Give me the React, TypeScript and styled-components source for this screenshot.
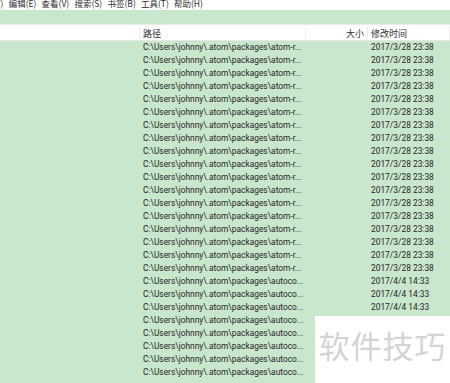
import React from "react"
import styled, { createGlobalStyle } from "styled-components"

const GlobalStyle = createGlobalStyle`
  html, body {
    margin: 0;
    padding: 0;
    background: #ffffff;
  }
  body {
    font-family: "Roboto", "Noto Sans CJK SC", sans-serif;
    color: #2b2b2b;
  }
`

const Page = styled.div`
  position: relative;
  width: 450px;
  height: 383px;
  overflow: hidden;
  background: #c8e7cc;
`

const MenuBar = styled.div`
  height: 10px;
  background: #ffffff;
  overflow: hidden;
`

const MenuList = styled.div`
  display: flex;
  gap: 5.2px;
  margin-top: -4px;
  margin-left: -24px;
  font-size: 8.5px;
  line-height: 14px;
  font-family: "Noto Sans CJK SC", sans-serif;
  color: #2e2e2e;
`

const MenuItem = styled.span`
  white-space: nowrap;
`

const Toolbar = styled.div`
  height: 14px;
  background: #c8e7cc;
  border-bottom: 1px solid #e3f1e5;
`

const Gap = styled.div`
  height: 1px;
  background: #ffffff;
`

const Grid = styled.div`
  display: grid;
  grid-template-columns: 140px 166px 62px 1fr;
`

const HeaderCell = styled.div<{ $align?: "left" | "right" }>`
  height: 15px;
  background: #ffffff;
  border-right: 1px solid #eeeeee;
  border-bottom: 1px solid #e6e6e6;
  box-sizing: border-box;
  display: flex;
  align-items: center;
  justify-content: ${(p) => (p.$align === "right" ? "flex-end" : "flex-start")};
  padding: 0 3px;
  font-family: "Noto Sans CJK SC", sans-serif;
  font-size: 9px;
  color: #2e2e2e;
  &:last-child {
    border-right: none;
  }
`

const Cell = styled.div<{ $align?: "left" | "right" }>`
  height: 13px;
  line-height: 13px;
  padding: 0 3px;
  font-size: 8.4px;
  white-space: nowrap;
  overflow: hidden;
  text-align: ${(p) => p.$align ?? "left"};
  color: #262626;
`

const Watermark = styled.div`
  position: absolute;
  left: 315px;
  top: 316px;
  right: 0;
  bottom: 0;
  background: #ffffff;
  display: flex;
  align-items: center;
  justify-content: center;
  font-family: "Noto Sans CJK SC", sans-serif;
  font-size: 31px;
  letter-spacing: 1px;
  color: #d4d4d4;
  padding-bottom: 10px;
  box-sizing: border-box;
`

const menus = ["文件(F)", "编辑(E)", "查看(V)", "搜索(S)", "书签(B)", "工具(T)", "帮助(H)"]

type Row = { path: string; date: string }

const rows: Row[] = [
  ...Array.from({ length: 18 }, () => ({
    path: "C:\\Users\\johnny\\.atom\\packages\\atom-r...",
    date: "2017/3/28 23:38",
  })),
  ...Array.from({ length: 8 }, () => ({
    path: "C:\\Users\\johnny\\.atom\\packages\\autoco...",
    date: "2017/4/4 14:33",
  })),
]

export default function App() {
  return (
    <>
      <GlobalStyle />
      <Page>
        <MenuBar>
          <MenuList>
            {menus.map((m) => (
              <MenuItem key={m}>{m}</MenuItem>
            ))}
          </MenuList>
        </MenuBar>
        <Toolbar />
        <Gap />
        <Grid>
          <HeaderCell />
          <HeaderCell>路径</HeaderCell>
          <HeaderCell $align="right">大小</HeaderCell>
          <HeaderCell>修改时间</HeaderCell>
          {rows.map((r, i) => (
            <React.Fragment key={i}>
              <Cell />
              <Cell>{r.path}</Cell>
              <Cell $align="right" />
              <Cell>{r.date}</Cell>
            </React.Fragment>
          ))}
        </Grid>
        <Watermark>软件技巧</Watermark>
      </Page>
    </>
  )
}
